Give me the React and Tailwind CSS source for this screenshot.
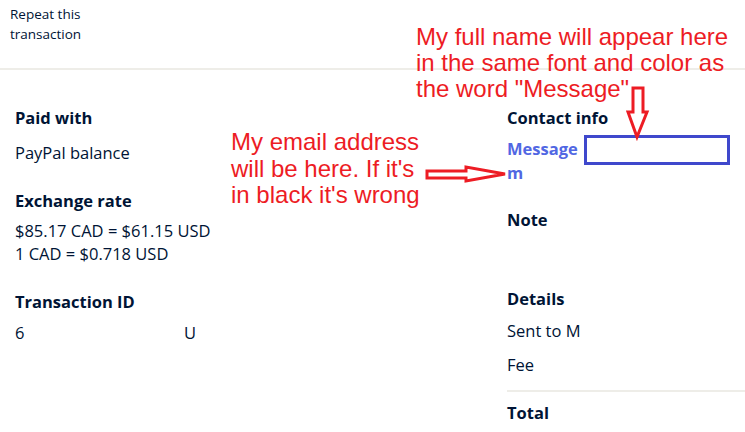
import React from "react";

const INK = "text-[#001435]";

function Heading({ children, className = "" }) {
  return <p className={`font-bold text-[16.5px] leading-6 ${INK} ${className}`}>{children}</p>;
}

function Line({ children, className = "" }) {
  return <p className={`text-[16.5px] leading-6 ${INK} ${className}`}>{children}</p>;
}

function Annotations() {
  return (
    <>
      <div className="absolute left-[416px] top-[24px] text-[24px] leading-[26px] text-[#ed1c24] font-['Liberation_Sans',Arial,sans-serif] whitespace-nowrap">
        <p>My full name will appear here</p>
        <p>in the same font and color as</p>
        <p>the word "Message"</p>
      </div>
      <div className="absolute left-[231px] top-[129px] text-[24px] leading-[26.5px] text-[#ed1c24] font-['Liberation_Sans',Arial,sans-serif] whitespace-nowrap">
        <p>My email address</p>
        <p>will be here. If it's</p>
        <p>in black it's wrong</p>
      </div>
      <div className="absolute left-[584px] top-[135px] w-[146px] h-[30px] border-[3px] border-[#3f48cc] bg-white" />
      <svg className="absolute left-0 top-0 pointer-events-none" width="745" height="432">
        <polygon
          points="427,171 466,171 466,167 505,174 466,181 466,178 427,178"
          fill="white"
          stroke="#ed1c24"
          strokeWidth="3"
        />
        <polygon
          points="633,88 643,88 643,112 647,112 637,137 628,112 633,112"
          fill="white"
          stroke="#ed1c24"
          strokeWidth="3"
        />
      </svg>
    </>
  );
}

export default function App() {
  return (
    <div className="relative w-[745px] h-[432px] overflow-hidden bg-white font-['Open_Sans','Noto_Sans',sans-serif]">
      <div className="h-[70px] border-b-2 border-[#eeede8] pl-[10px] pt-[4px]">
        <p className={`text-[13.5px] leading-5 ${INK}`}>
          Repeat this
          <br />
          transaction
        </p>
      </div>

      <div className="flex">
        <div className="w-[507px] shrink-0 pl-[15px] pt-[36px]">
          <Heading>Paid with</Heading>
          <Line className="mt-[11px]">PayPal balance</Line>

          <Heading className="mt-[24px]">Exchange rate</Heading>
          <div className="mt-[6px]">
            <Line className="leading-[23px]">$85.17 CAD = $61.15 USD</Line>
            <Line className="leading-[23px]">1 CAD = $0.718 USD</Line>
          </div>

          <Heading className="mt-[25px]">Transaction ID</Heading>
          <div className="mt-[7px] flex">
            <Line className="w-[169px]">6</Line>
            <Line>U</Line>
          </div>
        </div>

        <div className="flex-1 pt-[36px]">
          <Heading>Contact info</Heading>
          <div className="mt-[7px] font-bold text-[16.5px] leading-6 text-[#5167e3]">
            <p>Message</p>
            <p>m</p>
          </div>

          <Heading className="mt-[23px]">Note</Heading>

          <Heading className="mt-[55px]">Details</Heading>
          <Line className="mt-[8px]">Sent to M</Line>
          <Line className="mt-[10px]">Fee</Line>
          <div className="mt-[13px] border-t-2 border-[#eeede8]" />
          <Heading className="mt-[9px]">Total</Heading>
        </div>
      </div>

      <Annotations />
    </div>
  );
}
